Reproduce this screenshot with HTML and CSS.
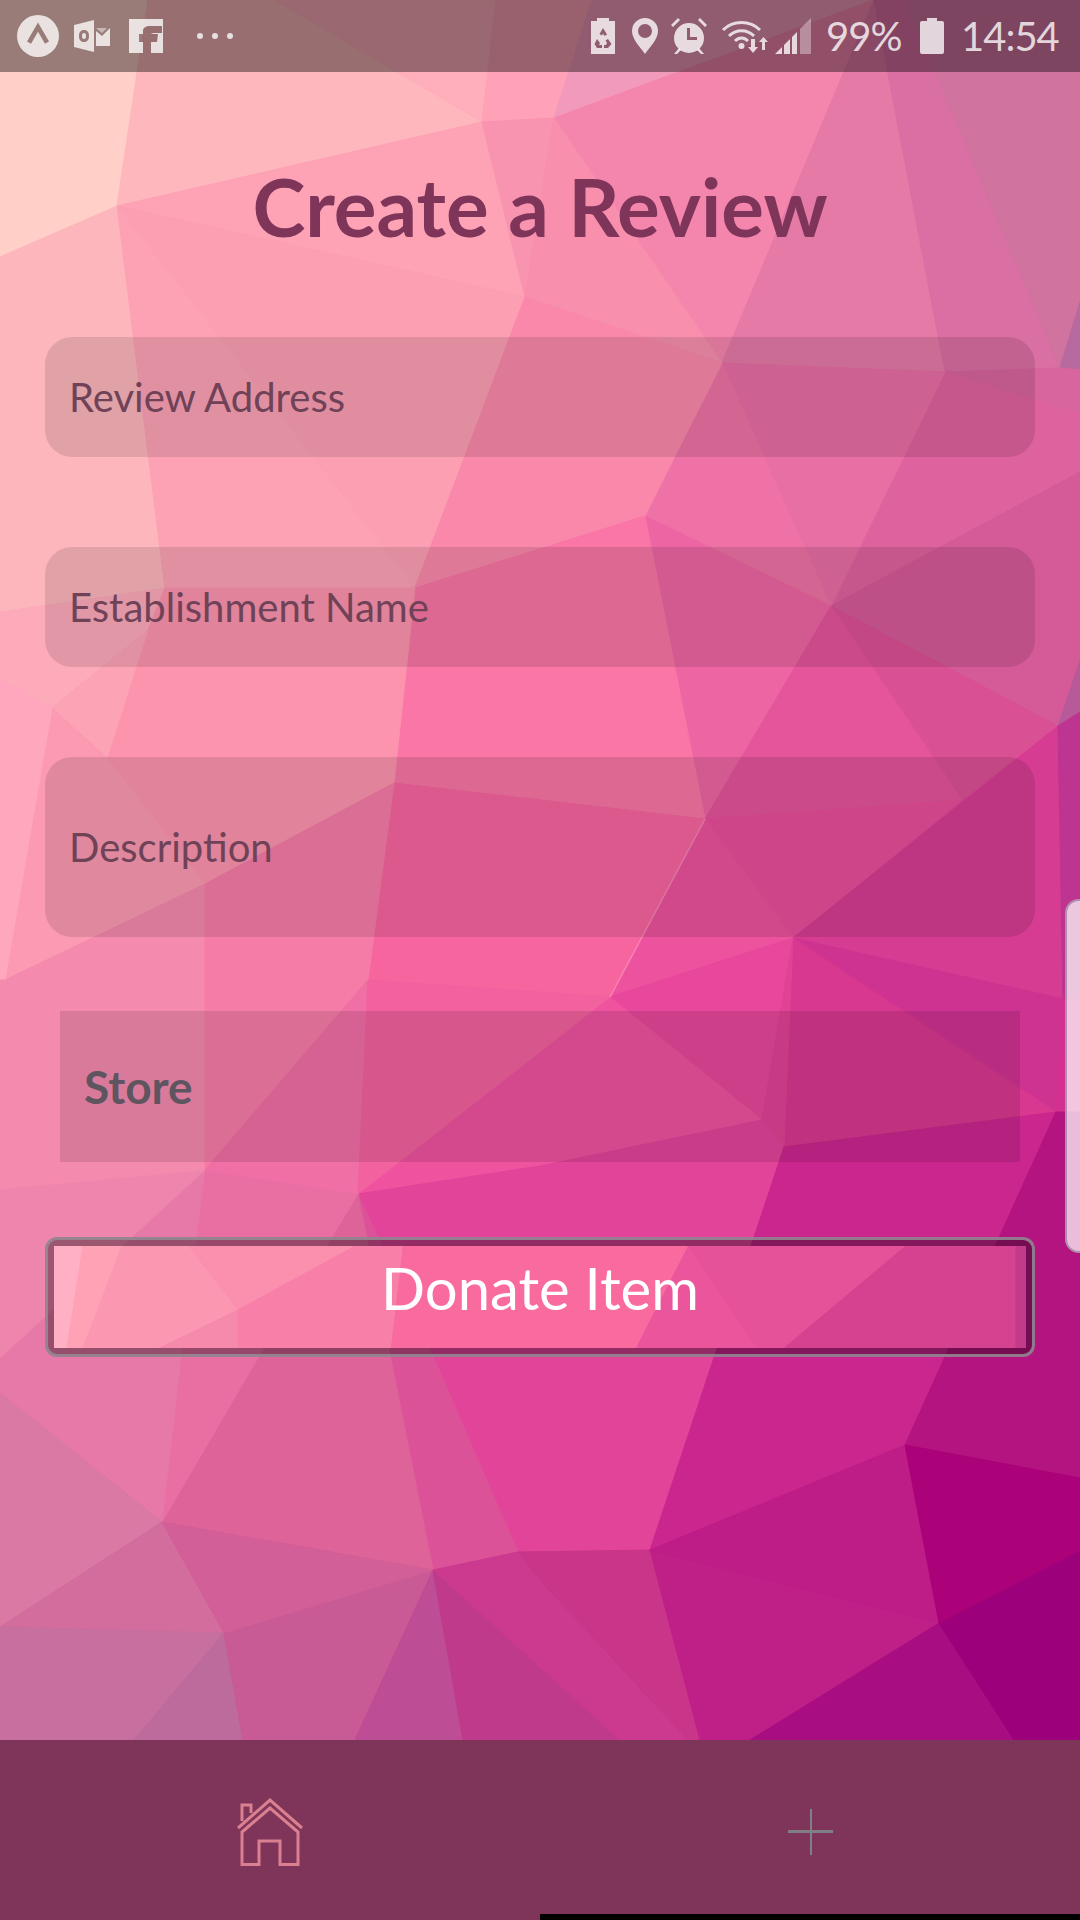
FILE: index.html
```html
<!DOCTYPE html>
<html lang="en">
<head>
    <meta charset="UTF-8">
    <meta name="viewport" content="width=device-width, initial-scale=1.0">
    <title>Create a Review</title>
    <link rel="stylesheet" href="styles.css">
</head>
<body>
    <div class="screen">
        <!-- wallpaper, coordinates are page pixels -->
        <svg class="wallpaper mesh" viewBox="0 0 1080 1740">
            <rect width="1080" height="1740" fill="#e2449a"/>
            <polygon fill="#ffcfc8" stroke="#ffcfc8" points="0,0 148,0 117,206 0,257"/>
            <polygon fill="#feb7bc" stroke="#feb7bc" points="148,0 275,0 482,122 117,206"/>
            <polygon fill="#ffaebb" stroke="#ffaebb" points="275,0 496,0 482,122"/>
            <polygon fill="#fda3b5" stroke="#fda3b5" points="117,206 482,122 525,297"/>
            <polygon fill="#ffa2b8" stroke="#ffa2b8" points="496,0 592,0 554,118 482,122"/>
            <polygon fill="#f29abb" stroke="#f29abb" points="592,0 874,0 554,118"/>
            <polygon fill="#f485ad" stroke="#f485ad" points="554,118 874,0 722,363"/>
            <polygon fill="#f994b0" stroke="#f994b0" points="482,122 554,118 525,297"/>
            <polygon fill="#f88fad" stroke="#f88fad" points="554,118 525,297 722,363"/>
            <polygon fill="#e57aa7" stroke="#e57aa7" points="874,0 945,372 722,363"/>
            <polygon fill="#da6fa3" stroke="#da6fa3" points="874,0 905,0 1060,368 945,372"/>
            <polygon fill="#d0739f" stroke="#d0739f" points="905,0 1080,0 1080,302 1060,368"/>
            <polygon fill="#b76aa0" stroke="#b76aa0" points="1060,368 1080,302 1080,370"/>
            <polygon fill="#d8659d" stroke="#d8659d" points="945,372 1060,368 1080,370 1080,414"/>
            <polygon fill="#de629e" stroke="#de629e" points="945,372 1080,414 1080,472 831,606"/>
            <polygon fill="#d55a98" stroke="#d55a98" points="831,606 1080,472 1080,660 1058,726"/>
            <polygon fill="#b85a99" stroke="#b85a99" points="1058,726 1080,660 1080,712"/>
            <polygon fill="#e76fa4" stroke="#e76fa4" points="722,363 945,372 831,606"/>
            <polygon fill="#ee72a6" stroke="#ee72a6" points="722,363 831,606 645,516"/>
            <polygon fill="#ed66a3" stroke="#ed66a3" points="645,516 831,606 819,630 705,819"/>
            <polygon fill="#da5095" stroke="#da5095" points="831,606 1058,726 962,800"/>
            <polygon fill="#e5559c" stroke="#e5559c" points="831,606 962,800 705,819"/>
            <polygon fill="#e84f9a" stroke="#e84f9a" points="962,800 793,938 705,819"/>
            <polygon fill="#d63c92" stroke="#d63c92" points="1058,726 793,938 1063,999"/>
            <polygon fill="#bd3590" stroke="#bd3590" points="1058,726 1080,712 1080,1000 1063,999"/>
            <polygon fill="#cf3391" stroke="#cf3391" points="793,938 1063,999 1056,1112"/>
            <polygon fill="#d8388f" stroke="#d8388f" points="793,938 1056,1112 784,1147"/>
            <polygon fill="#d3308f" stroke="#d3308f" points="1063,999 1080,1000 1080,1112 1056,1112"/>
            <polygon fill="#ec529d" stroke="#ec529d" points="705,819 793,938 610,997"/>
            <polygon fill="#e8479b" stroke="#e8479b" points="610,997 793,938 762,1120"/>
            <polygon fill="#e04295" stroke="#e04295" points="793,938 784,1147 762,1120"/>
            <polygon fill="#ef529f" stroke="#ef529f" points="610,997 762,1120 540,1166 358,1194"/>
            <polygon fill="#e2449a" stroke="#e2449a" points="358,1194 540,1166 762,1120 784,1147 650,1550 518,1552 434,1358"/>
            <polygon fill="#cb268e" stroke="#cb268e" points="784,1147 1056,1112 905,1445 650,1550"/>
            <polygon fill="#b4147f" stroke="#b4147f" points="1056,1112 1080,1112 1080,1478 905,1445"/>
            <polygon fill="#dc5298" stroke="#dc5298" points="358,1194 434,1358 518,1552 433,1570"/>
            <polygon fill="#de6399" stroke="#de6399" points="358,1194 433,1570 162,1522 258,1358"/>
            <polygon fill="#e96fa3" stroke="#e96fa3" points="205,1170 358,1194 258,1358 162,1522 181,1358"/>
            <polygon fill="#e679a7" stroke="#e679a7" points="205,1170 181,1358 162,1522 0,1393 0,1358"/>
            <polygon fill="#ee85ad" stroke="#ee85ad" points="0,1189 205,1170 0,1358"/>
            <polygon fill="#da79a3" stroke="#da79a3" points="0,1393 162,1522 0,1627"/>
            <polygon fill="#d26d9d" stroke="#d26d9d" points="0,1627 162,1522 224,1633"/>
            <polygon fill="#c76f9f" stroke="#c76f9f" points="0,1627 224,1633 134,1740 0,1740"/>
            <polygon fill="#bd6a9d" stroke="#bd6a9d" points="224,1633 134,1740 243,1740"/>
            <polygon fill="#c85a95" stroke="#c85a95" points="224,1633 433,1570 355,1740 243,1740"/>
            <polygon fill="#d25f97" stroke="#d25f97" points="162,1522 433,1570 224,1633"/>
            <polygon fill="#bd4d95" stroke="#bd4d95" points="433,1570 463,1740 355,1740"/>
            <polygon fill="#c03a8c" stroke="#c03a8c" points="433,1570 620,1740 463,1740"/>
            <polygon fill="#cb3a8e" stroke="#cb3a8e" points="433,1570 518,1552 540,1580 688,1740 620,1740"/>
            <polygon fill="#c93588" stroke="#c93588" points="518,1552 650,1550 700,1740 688,1740 540,1580"/>
            <polygon fill="#bf2088" stroke="#bf2088" points="650,1550 939,1623 750,1740 700,1740"/>
            <polygon fill="#be1c87" stroke="#be1c87" points="650,1550 905,1445 939,1623"/>
            <polygon fill="#a80e82" stroke="#a80e82" points="939,1623 1014,1740 750,1740"/>
            <polygon fill="#9c007a" stroke="#9c007a" points="939,1623 1080,1550 1080,1740 1014,1740"/>
            <polygon fill="#ab0279" stroke="#ab0279" points="905,1445 1080,1478 1080,1550 939,1623"/>
            <polygon fill="#fdb7bc" stroke="#fdb7bc" points="0,257 117,206 165,588 0,612"/>
            <polygon fill="#fc9fb3" stroke="#fc9fb3" points="117,206 525,297 415,588"/>
            <polygon fill="#fda2b5" stroke="#fda2b5" points="117,206 415,588 165,588"/>
            <polygon fill="#fa88ab" stroke="#fa88ab" points="525,297 722,363 645,516 415,588"/>
            <polygon fill="#f976a6" stroke="#f976a6" points="415,588 645,516 705,819 394,783"/>
            <polygon fill="#fdaabb" stroke="#fdaabb" points="0,612 165,588 148,630 52,708 0,680"/>
            <polygon fill="#fd94ae" stroke="#fd94ae" points="165,588 415,588 394,783 205,884 107,758 148,630"/>
            <polygon fill="#fda3b6" stroke="#fda3b6" points="52,708 148,630 107,758"/>
            <polygon fill="#fc9ab2" stroke="#fc9ab2" points="52,708 107,758 205,884 5,980"/>
            <polygon fill="#ffa8bd" stroke="#ffa8bd" points="0,680 52,708 5,980 0,980"/>
            <polygon fill="#f7659f" stroke="#f7659f" points="394,783 705,819 610,997 368,980"/>
            <polygon fill="#f48aae" stroke="#f48aae" points="5,980 205,884 205,1170 0,1189 0,980"/>
            <polygon fill="#f67ca8" stroke="#f67ca8" points="205,884 394,783 368,980 205,1170"/>
            <polygon fill="#f06fa5" stroke="#f06fa5" points="368,980 358,1194 205,1170"/>
            <polygon fill="#f2629f" stroke="#f2629f" points="368,980 610,997 358,1194"/>
            <line class="wallpaper-glint" x1="705" y1="819" x2="610" y2="997"/>
        </svg>

        <div class="status-bar">
            <svg class="icon icon-circle" viewBox="0 0 42 42">
                <path fill-rule="evenodd" d="M21 0a21 21 0 1 1 0 42 21 21 0 0 1 0-42ZM21 7.500 10 26.500l4 2.300 7-12 7 12 4-2.300Z"/>
            </svg>
            <svg class="icon icon-outlook" viewBox="0 0 36 32">
                <path fill-rule="evenodd" d="M0 5 20 0V32L0 27ZM10 10c-3.500 0-5 2.500-5 6s1.500 6 5 6 5-2.500 5-6-1.500-6-5-6Zm0 3c1.500 0 2 1.300 2 3s-.5 3-2 3-2-1.300-2-3 .5-3 2-3Z"/>
                <path d="M22 11 28 16 36 8V26H22Z"/>
                <path d="M22 8H33L28 13Z" opacity=".6"/>
            </svg>
            <svg class="icon icon-fb" viewBox="0 0 34 34">
                <path fill-rule="evenodd" d="M0 0H34V34H0ZM14 34V23H10V15H14V12C14 8.500 17 7 21 7H33V14H25C23 14 22 15 22 15H29L28 23H22V34Z"/>
            </svg>
            <svg class="icon icon-more" viewBox="0 0 40 6">
                <circle cx="3" cy="3" r="3"/><circle cx="18" cy="3" r="3"/><circle cx="33" cy="3" r="3"/>
            </svg>

            <svg class="icon icon-saver" viewBox="0 0 24 36">
                <path fill-rule="evenodd" d="M6 0H18V3H24V36H0V3H6ZM12 10 8.500 16l2.500 1.500 1-2 1.500 2.500 2.500-1.500ZM6 21 3.500 26l2.500 4h5v-3H8l1-2ZM17 21l-2.500 1.500L16 25l-1 2h-2v3h4l3.500-4Z"/>
            </svg>
            <svg class="icon icon-pin" viewBox="0 0 26 36">
                <path fill-rule="evenodd" d="M13 0a13 13 0 0 1 13 13c0 8-8 16-13 23C8 29 0 21 0 13A13 13 0 0 1 13 0Zm0 6a7 7 0 1 0 0 14 7 7 0 0 0 0-14Z"/>
            </svg>
            <svg class="icon icon-alarm" viewBox="0 0 36 36">
                <path fill-rule="evenodd" d="M18 5a15 15 0 1 1 0 30 15 15 0 0 1 0-30ZM16 10V22H26V19H19V10Z"/>
                <path d="M0 7 7 0 9 2 2 9ZM36 7 29 0 27 2 34 9ZM3 36 8 30 10 32 6 36ZM33 36 28 30 26 32 30 36Z"/>
            </svg>
            <svg class="icon icon-wifi" viewBox="0 0 47 36">
                <g class="wifi-arcs">
                    <path d="M2 12C12 2 29 2 39 12"/>
                    <path d="M8 18C15 11 26 11 33 18"/>
                    <path d="M14 23C18 19 23 19 27 23"/>
                </g>
                <circle cx="20.500" cy="28" r="3"/>
                <path d="M30 21h4v8h3l-5 6-5-6h3ZM41 32h3v-8h3l-4.500-5L38 24h3Z"/>
            </svg>
            <svg class="icon icon-signal" viewBox="0 0 36 36">
                <path d="M0 36 7 29V36ZM9 36V27L15 21V36ZM17 36V19L22 14V36Z"/>
                <path d="M25 36V11L36 0V36Z" opacity=".45"/>
            </svg>
            <span class="status-text status-pct">99%</span>
            <svg class="icon icon-battery" viewBox="0 0 24 36">
                <path d="M7 0H17V3H22Q24 3 24 5V34Q24 36 22 36H2Q0 36 0 34V5Q0 3 2 3H7Z"/>
            </svg>
            <span class="status-text status-time">14:54</span>
        </div>

        <main class="form">
            <h1 class="form-title">Create a Review</h1>
            <div class="field">Review Address</div>
            <div class="field">Establishment Name</div>
            <div class="field field-tall">Description</div>
            <div class="picker">Store</div>
            <div class="donate-btn">
                <div class="donate-face">
                    <svg class="donate-bg mesh" viewBox="54 1246 971 102" preserveAspectRatio="none">
                        <rect x="54" y="1246" width="971" height="102" fill="#f76da0"/>
                        <polygon fill="#ffb0c4" stroke="#ffb0c4" points="54,1246 83,1246 67,1348 54,1348"/>
                        <polygon fill="#ffa2b6" stroke="#ffa2b6" points="83,1246 122,1246 83,1348 67,1348"/>
                        <polygon fill="#fc97b2" stroke="#fc97b2" points="122,1246 189,1246 238,1310 160,1348 83,1348"/>
                        <polygon fill="#fb8fae" stroke="#fb8fae" points="189,1246 355,1246 238,1310"/>
                        <polygon fill="#f58aad" stroke="#f58aad" points="238,1310 238,1348 160,1348"/>
                        <polygon fill="#f880a8" stroke="#f880a8" points="238,1310 355,1246 403,1246 391,1348 238,1348"/>
                        <polygon fill="#f96a9f" stroke="#f96a9f" points="403,1246 688,1246 636,1348 391,1348"/>
                        <polygon fill="#ea559c" stroke="#ea559c" points="688,1246 757,1348 636,1348"/>
                        <polygon fill="#e5529a" stroke="#e5529a" points="688,1246 905,1246 784,1348 757,1348"/>
                        <polygon fill="#d5428f" stroke="#d5428f" points="905,1246 1015,1246 1015,1348 784,1348"/>
                        <polygon fill="#c23b8b" stroke="#c23b8b" points="1015,1246 1025,1246 1025,1348 1015,1348"/>
                    </svg>
                    <span class="donate-label">Donate Item</span>
                </div>
            </div>
        </main>

        <!-- slide-in edge panel -->
        <div class="edge-panel"></div>

        <nav class="tab-bar">
            <div class="tab">
                <svg class="tab-home" viewBox="0 0 66 68">
                    <path d="M1 30 33 2 65 30M5 34 33 10 61 34V66.500H43V43H22V66.500H5ZM5 23V7H14V15"/>
                </svg>
            </div>
            <div class="tab">
                <div class="tab-plus"></div>
            </div>
            <div class="nav-pill"></div>
        </nav>
    </div>
</body>
</html>
```

FILE: styles.css
```css
* {
    box-sizing: border-box;
}
body {
    margin: 0;
    font-family: Lato, "Noto Sans", sans-serif;
}
.screen {
    position: relative;
    width: 1080px;
    height: 1920px;
    display: flex;
    flex-direction: column;
    overflow: hidden;
}
.wallpaper {
    position: absolute;
    top: 0;
    left: 0;
    width: 1080px;
    height: 1740px;
}
.mesh polygon {
    stroke-width: 1;
    stroke-linejoin: round;
}
.wallpaper-glint {
    stroke: #f883b4;
    stroke-width: 1.5;
}

/* status bar */
.status-bar {
    position: relative;
    flex: none;
    height: 72px;
    padding-left: 17px;
    display: flex;
    align-items: center;
    background: rgba(0, 0, 0, 0.4);
    color: rgba(255, 255, 255, 0.78);
}
.icon {
    flex: none;
    fill: rgba(255, 255, 255, 0.78);
}
.icon-circle { width: 42px; height: 42px; }
.icon-outlook { width: 36px; height: 32px; margin-left: 15px; }
.icon-fb { width: 34px; height: 34px; margin-left: 19px; }
.icon-more { width: 40px; height: 6px; margin-left: 34px; }
.icon-saver { width: 24px; height: 36px; margin-left: 354px; }
.icon-pin { width: 26px; height: 36px; margin-left: 17px; }
.icon-alarm { width: 36px; height: 36px; margin-left: 13px; }
.icon-wifi { width: 47px; height: 36px; margin-left: 14px; }
.icon-signal { width: 36px; height: 36px; margin-left: 7px; }
.icon-battery { width: 24px; height: 36px; margin-left: 16px; }
.wifi-arcs {
    fill: none;
    stroke: rgba(255, 255, 255, 0.78);
    stroke-width: 3;
}
.status-text {
    font-size: 40px;
    line-height: 42px;
}
.status-pct {
    width: 78px;
    margin-left: 15px;
    letter-spacing: -1px;
}
.status-time {
    width: 96px;
    margin-left: 17px;
    letter-spacing: -1px;
}

/* form */
.form {
    position: relative;
    flex: 1;
    padding: 84px 45px 0;
}
.form-title {
    margin: 0 0 81px;
    height: 100px;
    font-size: 80px;
    font-weight: 700;
    line-height: 100px;
    text-align: center;
    color: #7f3559;
}
.field {
    height: 120px;
    margin-bottom: 90px;
    padding-left: 24px;
    display: flex;
    align-items: center;
    border-radius: 27px;
    background: rgba(0, 0, 0, 0.11);
    font-size: 40px;
    color: #6f4258;
}
.field-tall {
    height: 180px;
    margin-bottom: 74px;
}
.picker {
    height: 151px;
    margin: 0 15px 75px;
    padding-left: 24px;
    display: flex;
    align-items: center;
    background: rgba(0, 0, 0, 0.11);
    font-size: 46px;
    font-weight: 700;
    color: #5f5560;
}
.donate-btn {
    height: 120px;
    padding: 6px;
    border: 3px solid rgba(150, 140, 150, 0.85);
    border-radius: 12px;
    background: rgba(0, 0, 0, 0.35);
}
.donate-face {
    position: relative;
    height: 102px;
    display: flex;
    align-items: center;
    justify-content: center;
    overflow: hidden;
}
.donate-bg {
    position: absolute;
    top: 0;
    left: 0;
    width: 100%;
    height: 100%;
}
.donate-label {
    position: relative;
    padding-bottom: 20px;
    font-size: 58px;
    color: #fff;
}

/* edge panel */
.edge-panel {
    position: absolute;
    top: 899px;
    left: 1065px;
    width: 15px;
    height: 354px;
    border: 2px solid rgba(160, 130, 165, 0.8);
    border-right: none;
    border-radius: 14px 0 0 14px;
    background: rgba(255, 255, 255, 0.72);
}

/* tab bar */
.tab-bar {
    position: relative;
    flex: none;
    height: 180px;
    padding-top: 4px;
    display: flex;
    background: #7f3559;
}
.tab {
    flex: 1;
    display: flex;
    align-items: center;
    justify-content: center;
}
.tab-home {
    width: 66px;
    height: 68px;
    fill: none;
    stroke: #da8090;
    stroke-width: 3;
}
.tab-plus {
    position: relative;
    width: 45px;
    height: 46px;
}
.tab-plus::before {
    content: "";
    position: absolute;
    top: 21px;
    left: 0;
    width: 45px;
    height: 3px;
    background: #7f7f85;
}
.tab-plus::after {
    content: "";
    position: absolute;
    top: 0;
    left: 22px;
    width: 2px;
    height: 46px;
    background: #7f7f85;
}
.nav-pill {
    position: absolute;
    right: 0;
    bottom: 0;
    width: 540px;
    height: 6px;
    background: #000;
}
```
